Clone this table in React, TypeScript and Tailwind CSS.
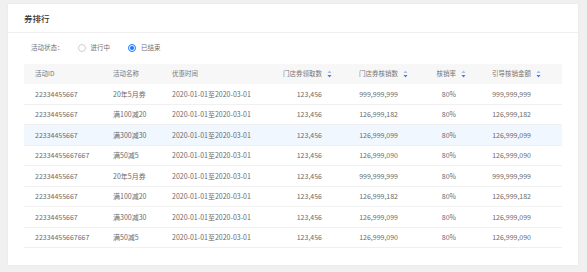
import React from 'react'

const FONT = { fontFamily: '"Noto Sans CJK SC", "Noto Sans", sans-serif' }

type Row = {
  id: string
  name: string
  time: string
  recv: string
  used: string
  rate: string
  amount: string
}

const rows: Row[] = [
  { id: '22334455667', name: '20年5月券', time: '2020-01-01至2020-03-01', recv: '123,456', used: '999,999,999', rate: '80%', amount: '999,999,999' },
  { id: '22334455667', name: '满100减20', time: '2020-01-01至2020-03-01', recv: '123,456', used: '126,999,182', rate: '80%', amount: '126,999,182' },
  { id: '22334455667', name: '满300减30', time: '2020-01-01至2020-03-01', recv: '123,456', used: '126,999,099', rate: '80%', amount: '126,999,099' },
  { id: '22334455667667', name: '满50减5', time: '2020-01-01至2020-03-01', recv: '123,456', used: '126,999,090', rate: '80%', amount: '126,999,090' },
  { id: '22334455667', name: '20年5月券', time: '2020-01-01至2020-03-01', recv: '123,456', used: '999,999,999', rate: '80%', amount: '999,999,999' },
  { id: '22334455667', name: '满100减20', time: '2020-01-01至2020-03-01', recv: '123,456', used: '126,999,182', rate: '80%', amount: '126,999,182' },
  { id: '22334455667', name: '满300减30', time: '2020-01-01至2020-03-01', recv: '123,456', used: '126,999,099', rate: '80%', amount: '126,999,099' },
  { id: '22334455667667', name: '满50减5', time: '2020-01-01至2020-03-01', recv: '123,456', used: '126,999,090', rate: '80%', amount: '126,999,090' },
]

function SortIcon() {
  return (
    <svg width="5" height="8" viewBox="0 0 5 8" className="absolute right-[9px] top-1/2 -translate-y-1/2">
      <path d="M2.5 0.5 L4.5 3 L0.5 3 Z" fill="#a9bfe9" />
      <path d="M2.5 7.5 L4.5 5 L0.5 5 Z" fill="#3f7be8" />
    </svg>
  )
}

function Radio({ checked, label }: { checked?: boolean; label: string }) {
  return (
    <div className="flex items-center gap-[5px]">
      <span
        className={
          checked
            ? 'w-[8px] h-[8px] rounded-full border border-[#1677ff] flex items-center justify-center'
            : 'w-[8px] h-[8px] rounded-full border border-[#d0d0d0]'
        }
      >
        {checked && <span className="w-[4px] h-[4px] rounded-full bg-[#1677ff]" />}
      </span>
      <span>{label}</span>
    </div>
  )
}

export default function App() {
  return (
    <div className="w-[587px] h-[272px] bg-[#f0f0f0] pt-[4px] pl-[8px] text-[#666]" style={FONT}>
      <div className="w-[570px] h-[261px] bg-white shadow-[0_0_2px_rgba(0,0,0,0.06)]">
        {/* header */}
        <div className="h-[29px] border-b border-[#eeeeee] px-4 flex items-center">
          <span className="text-[8.5px] font-medium text-[#333]">券排行</span>
        </div>

        <div className="px-4 pt-[7px]">
          {/* filter */}
          <div className="h-[16px] pl-[7px] flex items-center text-[6.5px] text-[#707070]">
            <span className="mr-[14px]">活动状态：</span>
            <div className="flex items-center gap-[18px]">
              <Radio label="进行中" />
              <Radio label="已结束" checked />
            </div>
          </div>

          {/* table */}
          <div className="mt-[8px] w-[538px]">
            <div className="h-[20px] bg-[#f7f7f7] flex items-center text-[6.5px] text-[#777]">
              <div className="w-[78px] pl-[11px]">活动ID</div>
              <div className="w-[59px] pl-[11px]">活动名称</div>
              <div className="w-[109px] pl-[11px]">优惠时间</div>
              <div className="relative w-[71px] pr-[19px] text-right">门店券领取数<SortIcon /></div>
              <div className="relative w-[76px] pr-[19px] text-right">门店券核销数<SortIcon /></div>
              <div className="relative w-[58px] pr-[19px] text-right">核销率<SortIcon /></div>
              <div className="relative w-[75px] pr-[19px] text-right">引导核销金额<SortIcon /></div>
            </div>
            {rows.map((r, i) => (
              <div
                key={i}
                className={
                  'h-[20.5px] flex items-center border-b border-[#f0f0f0] text-[7px] text-[#6b6b6b] ' +
                  (i === 2 ? 'bg-[#f0f7ff]' : '')
                }
              >
                <div className="w-[78px] pl-[11px]">{r.id}</div>
                <div className="w-[59px] pl-[11px]">{r.name}</div>
                <div className="w-[109px] pl-[11px]">{r.time}</div>
                <div className="w-[71px] pr-[19px] text-right">{r.recv}</div>
                <div className="w-[76px] pr-[19px] text-right">{r.used}</div>
                <div className="w-[58px] pr-[19px] text-right">{r.rate}</div>
                <div className="w-[75px] pr-[19px] text-right">{r.amount}</div>
              </div>
            ))}
          </div>
        </div>
      </div>
    </div>
  )
}
